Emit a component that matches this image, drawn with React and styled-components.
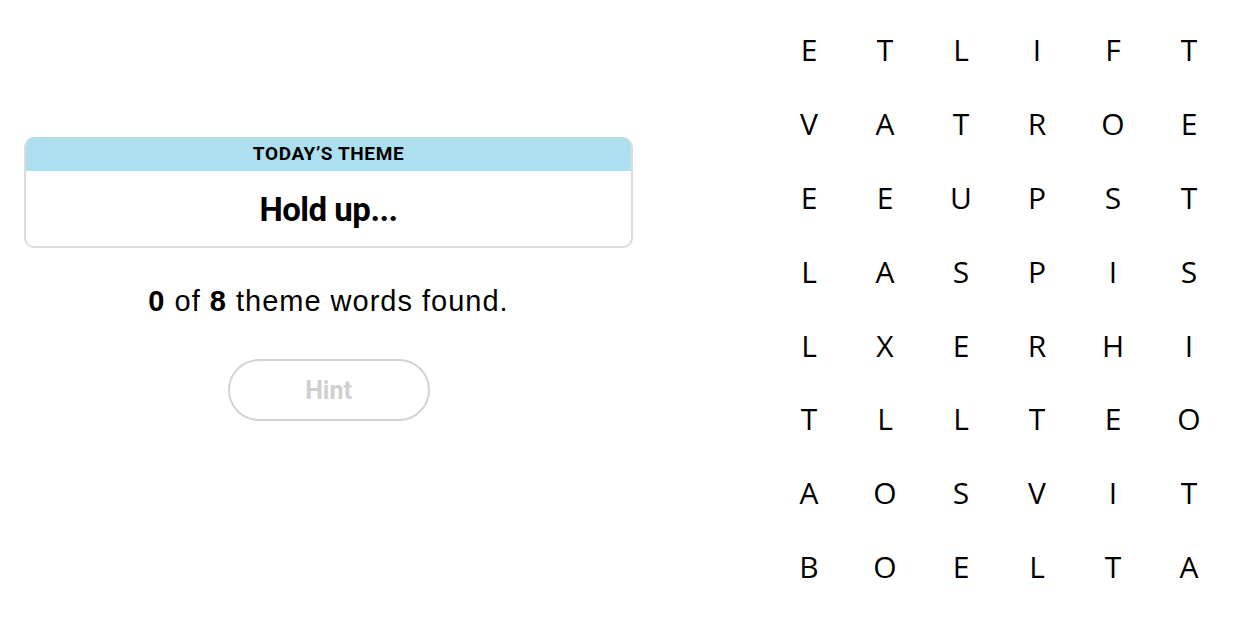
import styled, { createGlobalStyle } from "styled-components";

const LETTERS = [
  "ETLIFT",
  "VATROE",
  "EEUPST",
  "LASPIS",
  "LXERHI",
  "TLLTEO",
  "AOSVIT",
  "BOELTA",
];

export default function App() {
  return (
    <>
      <GlobalStyle />
      <Page>
        <Side>
          <ThemeCard>
            <ThemeLabel>Today’s Theme</ThemeLabel>
            <ThemeText>Hold up...</ThemeText>
          </ThemeCard>
          <Progress>
            <b>0</b> of <b>8</b> theme words found.
          </Progress>
          <HintButton disabled>Hint</HintButton>
        </Side>

        <Board>
          {LETTERS.map((row, r) =>
            row.split("").map((ch, c) => <Cell key={`${r}-${c}`}>{ch}</Cell>)
          )}
        </Board>
      </Page>
    </>
  );
}

const GlobalStyle = createGlobalStyle`
  html, body {
    margin: 0;
    padding: 0;
    background: #fff;
  }
  body {
    font-family: "Liberation Sans", Arial, sans-serif;
    color: #000;
  }
`;

const Page = styled.div`
  display: flex;
  align-items: flex-start;
  gap: 138px;
  height: 627px;
  padding-left: 24px;
  box-sizing: border-box;
`;

const Side = styled.div`
  width: 609px;
  padding-top: 137px;
  display: flex;
  flex-direction: column;
  align-items: center;
`;

const ThemeCard = styled.div`
  width: 100%;
  box-sizing: border-box;
  border: 2px solid #dcdcdc;
  border-top: none;
  border-radius: 10px;
  overflow: hidden;
  text-align: center;
`;

const ThemeLabel = styled.div`
  height: 34px;
  line-height: 34px;
  background: #aedfee;
  font-family: Roboto, "Liberation Sans", sans-serif;
  font-weight: 700;
  font-size: 19px;
  text-transform: uppercase;
  letter-spacing: 0.6px;
  margin: 0 -2px;
`;

const ThemeText = styled.div`
  height: 75px;
  line-height: 77px;
  font-family: Roboto, "Liberation Sans", sans-serif;
  font-weight: 700;
  font-size: 33px;
  letter-spacing: -0.5px;
`;

const Progress = styled.p`
  margin: 37px 0 0;
  font-size: 29px;
  line-height: 33px;
  letter-spacing: 1px;

  b {
    font-weight: 700;
  }
`;

const HintButton = styled.button`
  margin-top: 41px;
  width: 202px;
  height: 62px;
  border: 2px solid #d3d3d3;
  border-radius: 31px;
  background: #fff;
  color: #cfcfcf;
  font-family: Roboto, "Liberation Sans", sans-serif;
  font-weight: 700;
  font-size: 25px;
  cursor: default;
`;

const Board = styled.div`
  margin-top: 13px;
  display: grid;
  grid-template-columns: repeat(6, 76px);
  grid-auto-rows: 73.8px;
`;

const Cell = styled.span`
  display: flex;
  align-items: center;
  justify-content: center;
  font-family: "Open Sans", "Noto Sans", sans-serif;
  font-size: 30px;
  color: #000;
`;
